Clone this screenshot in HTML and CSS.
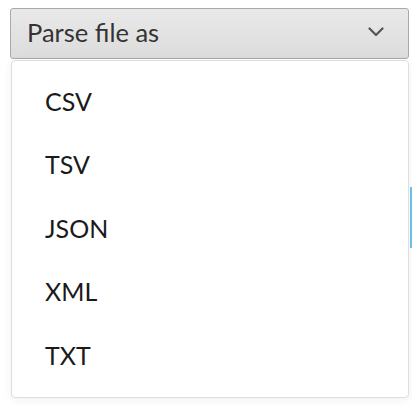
FILE: index.html
```html
<!DOCTYPE html>
<html>
<head>
<meta charset="utf-8">
<link rel="stylesheet" href="styles.css">
</head>
<body>
<div class="behind"></div>
<div class="wrap">
  <button class="select">
    <span class="label">Parse file as</span>
    <svg class="chev" width="16" height="10" viewBox="0 0 16 10"><path d="M1.5 1.5 L8 8 L14.5 1.5" fill="none" stroke="#555" stroke-width="2.2" stroke-linecap="round" stroke-linejoin="round"/></svg>
  </button>
  <ul class="menu">
    <li class="item">CSV</li>
    <li class="item">TSV</li>
    <li class="item">JSON</li>
    <li class="item">XML</li>
    <li class="item">TXT</li>
  </ul>
</div>
</body>
</html>
```
FILE: styles.css
```css
html, body {
  margin: 0;
  padding: 0;
  background: #fff;
  width: 412px;
  height: 406px;
  overflow: hidden;
  font-family: Lato, "Liberation Sans", sans-serif;
}
.behind {
  position: absolute;
  left: 410px;
  top: 187px;
  width: 2px;
  height: 61px;
  background: #6ec0eb;
}
.wrap {
  position: relative;
  padding: 8px 3px 0 10px;
  display: flex;
  flex-direction: column;
}
.select {
  box-sizing: border-box;
  width: 399px;
  height: 51px;
  margin: 0;
  padding: 0 24px 0 16px;
  display: flex;
  align-items: center;
  justify-content: space-between;
  border: 1px solid #a9a9a9;
  border-radius: 3px;
  background: linear-gradient(#e9e9e9, #dcdcdc);
  font-family: Lato, "Liberation Sans", sans-serif;
  font-size: 25.5px;
  color: #333;
  text-align: left;
}
.label {
  line-height: 1;
  padding-bottom: 2px;
}
.chev {
  display: block;
  margin-top: -3px;
}
.menu {
  box-sizing: border-box;
  list-style: none;
  margin: 1px 0 0 1px;
  padding: 8px 0 10px 0;
  width: 398px;
  background: #fff;
  border: 1px solid #dedede;
  border-radius: 4px;
  box-shadow: 0 2px 10px rgba(0,0,0,0.06);
}
.item {
  height: 63.5px;
  display: flex;
  align-items: center;
  padding-left: 33px;
  font-size: 25px;
  color: #1a1a1a;
}
```
